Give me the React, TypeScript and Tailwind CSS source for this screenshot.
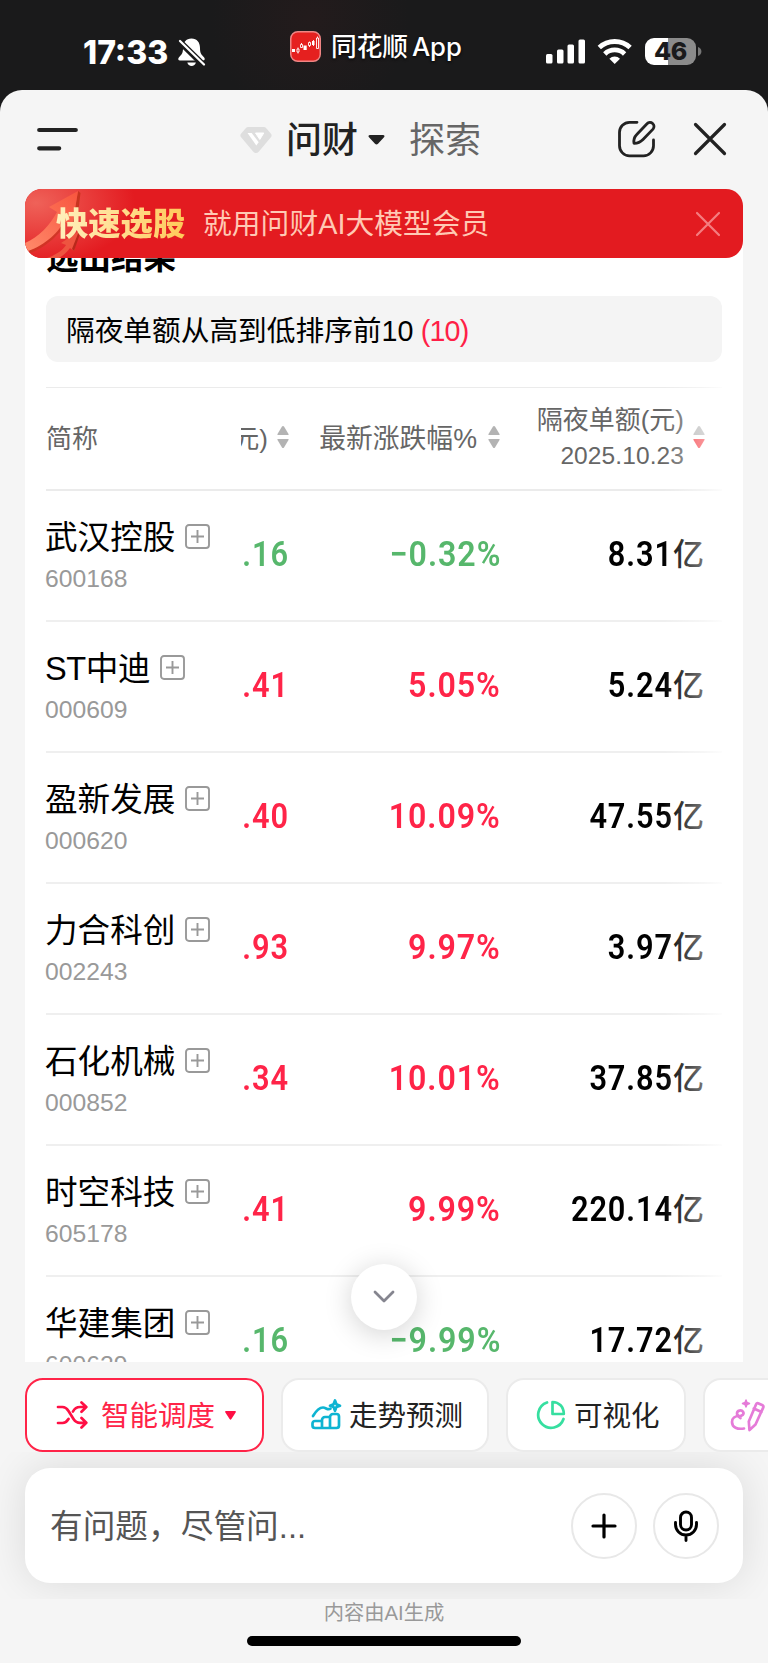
import type { ReactNode } from 'react';

type Row = { name: string; code: string; price: string; change: string; amount: string; down?: boolean };

const rows: Row[] = [
  { name: '武汉控股', code: '600168', price: '.16', change: '−0.32%', amount: '8.31', down: true },
  { name: 'ST中迪', code: '000609', price: '.41', change: '5.05%', amount: '5.24' },
  { name: '盈新发展', code: '000620', price: '.40', change: '10.09%', amount: '47.55' },
  { name: '力合科创', code: '002243', price: '.93', change: '9.97%', amount: '3.97' },
  { name: '石化机械', code: '000852', price: '.34', change: '10.01%', amount: '37.85' },
  { name: '时空科技', code: '605178', price: '.41', change: '9.99%', amount: '220.14' },
  { name: '华建集团', code: '600629', price: '.16', change: '−9.99%', amount: '17.72', down: true },
];

function StatusBar() {
  return (
    <div className="flex h-[90px] items-start text-white">
      <div className="ml-[83px] mt-[37px] w-[90px] whitespace-nowrap font-['Inter'] text-[32px] font-extrabold leading-[31px] tracking-[0px]">17:33</div>
      <svg className="ml-[4px] mt-[37px]" width="30" height="31" viewBox="0 0 30 31" fill="none">
        <path d="M14.500 1.500c-5.500 0-8.500 4-8.500 9.500 0 5-1.200 6.500-4 9.200-1.400 1.500-.8 3.300 1 3.300h23c1.800 0 2.400-1.800 1-3.300-2.800-2.700-4-4.200-4-9.200 0-5.500-3-9.500-8.500-9.500z" fill="#fff" />
        <path d="M10.300 25.500h8.600c-.6 2.200-2.200 3.500-4.300 3.500s-3.700-1.300-4.300-3.500z" fill="#fff" />
        <path d="M2 4 27 28.500" stroke="#1a1a1b" strokeWidth="6" />
        <path d="M3 4 27 27.500" stroke="#fff" strokeWidth="2.300" strokeLinecap="round" />
      </svg>
      <svg className="ml-[83px] mt-[31px]" width="31" height="31" viewBox="0 0 31 31" fill="none">
        <rect x=".75" y=".75" width="29.500" height="29.500" rx="7" fill="#e5201f" stroke="#f08584" strokeWidth="1.500" />
        <path d="M2 18h3v3H2zM13.500 14.500h3.200v4.500h-3.200zM22 10h2.500v4H22z" fill="#fff" />
        <path d="M7 18h2v3H7zM8 16.500V18M8 21v1.500M10.500 13.500h2v3h-2zM11.500 12v1.500M18.500 11.500h2v3h-2zM19.500 10.500v1M19.500 14.500V16M23.500 9v6M26.500 7h2v10.500h-2zM27.500 5.500V7" stroke="#fff" strokeWidth=".9" />
      </svg>
      <div className="ml-[10px] mt-[31px] w-[134px] whitespace-nowrap font-['Inter','Noto_Sans_CJK_SC',sans-serif] text-[25.700px] font-medium leading-[32px] [word-spacing:-3px] [text-shadow:0_1px_3px_#000]">同花顺 App</div>
      <svg className="ml-[81px] mt-[39px]" width="39" height="25" viewBox="0 0 39 25" fill="#fff">
        <rect x="0" y="15" width="6.500" height="9.500" rx="1.500" />
        <rect x="11" y="10.500" width="6.500" height="14" rx="1.500" />
        <rect x="21.500" y="5.500" width="6.500" height="19" rx="1.500" />
        <rect x="32.500" y="0.500" width="6.500" height="24" rx="1.500" />
      </svg>
      <svg className="ml-[12px] mt-[38px]" width="36" height="27" viewBox="0 0 36 27" fill="none" stroke="#fff" strokeWidth="4.800">
        <path d="M2.300 9.600a22.500 22.500 0 0 1 30.800 0" />
        <path d="M7.800 15.900a14.300 14.300 0 0 1 19.800 0" />
        <path d="M17.700 26l-5.300-5.300a7.400 7.400 0 0 1 10.600 0z" fill="#fff" stroke="none" />
      </svg>
      <div className="ml-[12px] mt-[38px] flex h-[27px] w-[51px] items-center justify-center rounded-[9px] bg-[linear-gradient(90deg,#fff_46%,#8b8b8b_46%)] font-['Inter'] text-[25px] font-extrabold leading-[27px] tracking-[-0.3px] text-[#1a1a1b]">46</div>
      <svg className="ml-[2px] mt-[47px]" width="4" height="9" viewBox="0 0 4 9"><path d="M0 0c4.500 1.500 4.500 7.500 0 9z" fill="#777" /></svg>
    </div>
  );
}

function TitleBar() {
  return (
    <div className="flex h-[98px] items-center">
      <svg className="ml-[37px]" width="41" height="24" viewBox="0 0 41 24" stroke="#222" strokeWidth="4.200" strokeLinecap="round">
        <path d="M2.200 3h36.600M2.200 21.300h20" />
      </svg>
      <svg className="ml-[162px] mt-[2px]" width="32" height="28" viewBox="0 0 32 28">
        <path d="M8.500 1h15a4 4 0 0 1 3 1.400l4.500 5.400a2.700 2.700 0 0 1-.1 3.400L18.700 25.800a3.700 3.700 0 0 1-5.400 0L1.100 11.200A2.700 2.700 0 0 1 1 7.800l4.500-5.400A4 4 0 0 1 8.500 1z" fill="#dedede" />
        <path d="M7.500 7h4.200l7 9.200-2.400 3.200z" fill="#fff" />
        <path d="M15.500 7h8.300l-4 6.500z" fill="#fff" stroke="#fff" strokeLinejoin="round" />
      </svg>
      <div className="ml-[14px] mt-[4px] w-[74px] text-[36px] font-medium leading-[50px] text-[#222]">问财</div>
      <svg className="ml-[8px] mt-[1px]" width="17" height="10" viewBox="0 0 17 10"><path d="M2 0h13c1.500 0 2 1.200 1 2.200L10 8.700c-1 1-2 1-3 0L1 2.200C0 1.200.5 0 2 0z" fill="#222" /></svg>
      <div className="ml-[24px] mt-[4px] w-[74px] text-[36px] leading-[50px] text-[#666]">探索</div>
      <svg className="ml-[135px]" width="38" height="38" viewBox="0 0 38 38" fill="none" stroke="#222" strokeWidth="2.800" strokeLinecap="round" strokeLinejoin="round">
        <path d="M19 2.300h-7.500a10 10 0 0 0-10 10v13.500a10 10 0 0 0 10 10h14a10 10 0 0 0 10-10V20" />
        <path d="M16 23.300c-.6-3.300.5-6.500 3-9L29 3.800a4 4 0 0 1 6 5.300L25 19.500c-2.500 2.500-5.500 3.900-9 3.800z" />
      </svg>
      <svg className="ml-[37px]" width="34" height="34" viewBox="0 0 34 34" stroke="#222" strokeWidth="3.200" strokeLinecap="round"><path d="M2.500 2.500l29 29M31.500 2.500l-29 29" /></svg>
    </div>
  );
}

function Banner() {
  return (
    <div className="relative z-10 mx-[25px] mt-[1px] flex h-[69px] items-center overflow-hidden rounded-[17px] bg-[#e31b20]">
      <svg className="absolute left-0 top-0" width="130" height="69" viewBox="0 0 130 69">
        <defs>
          <radialGradient id="glow" cx="0.100" cy="0.200" r="0.900"><stop offset="0" stopColor="#ef6259" /><stop offset="1" stopColor="#e31b20" /></radialGradient>
          <linearGradient id="arrow" x1="0" y1="1" x2="1" y2="0"><stop offset="0" stopColor="#ff8a6b" /><stop offset="1" stopColor="#f8553e" /></linearGradient>
        </defs>
        <rect width="110" height="69" fill="url(#glow)" />
        <path d="M53 2 55.500 4 51 41 47 38z" fill="#c8351f" />
        <path d="M0 62c16-5 32-17 39-31l2 2C34 48 17 60 3 65z" fill="#c8351f" opacity=".7" />
        <path d="M53 2 24 18l8 5C25 36 14 48 0 54v9c17-5 33-18 39-31l8 6z" fill="url(#arrow)" />
        <path d="M22 69c9-3 16-8 19-13l-5-2 18-12-5 20-4-3c-3 4-6 7-11 10z" fill="#ee5440" />
        <path d="M54 42l1.500 1.500L49 62l-2-2z" fill="#b9281b" />
      </svg>
      <div className="relative ml-[31px] w-[130px] bg-gradient-to-r from-[#fff0bd] to-[#ffc956] bg-clip-text text-[32.300px] font-black leading-[48px] text-transparent">快速选股</div>
      <div className="ml-[17px] whitespace-nowrap text-[28.800px] leading-[44px] text-[#ffc9b4]">就用问财AI大模型会员</div>
      <svg className="ml-auto mr-[22px]" width="26" height="26" viewBox="0 0 26 26" stroke="#f47d80" strokeWidth="2.200" strokeLinecap="round"><path d="M2 2l22 22M24 2 2 24" /></svg>
    </div>
  );
}

function Sort({ active }: { active?: boolean }) {
  return (
    <svg className="-mt-[3px] shrink-0" width="12" height="24" viewBox="0 0 12 24">
      <path d="M5 1.500 .5 9c-.3.600 0 1 .5 1h10c.5 0 .8-.4.500-1L7 1.500c-.5-.8-1.500-.8-2 0z" fill="#b3b3b3" />
      <path d="M5 22.500 .5 15c-.3-.6 0-1 .5-1h10c.5 0 .8.400.5 1L7 22.500c-.5.800-1.500.800-2 0z" fill={active ? '#f5383f' : '#b3b3b3'} />
    </svg>
  );
}

function Num({ children, className }: { children: ReactNode; className: string }) {
  return <span className={`inline-block origin-right whitespace-nowrap font-['Roboto'] text-[35px] font-semibold leading-[44px] tracking-[1px] ${className}`}>{children}</span>;
}

function StockRow({ r }: { r: Row }) {
  const tone = r.down ? 'text-[#57b76c]' : 'text-[#ff2448]';
  return (
    <div className="flex h-[131px] shrink-0 border-b-2 border-[#efefef]">
      <div className="-ml-px w-[196px] shrink-0 pt-[23px]">
        <div className="flex h-[48px] items-center">
          <span className={`whitespace-nowrap text-[32.600px] leading-[48px] text-black ${r.name.startsWith('ST') ? 'tracking-[-0.400px]' : ''}`}>{r.name}</span>
          <svg className="ml-[10px] mt-[-4px]" width="25" height="25" viewBox="0 0 25 25" fill="none" stroke="#999" strokeWidth="1.900">
            <rect x="1" y="1" width="23" height="23" rx="3" /><path d="M12.500 6v13M6 12.500h13" />
          </svg>
        </div>
        <div className="mt-[1px] text-[24.700px] leading-[32px] text-[#999]">{r.code}</div>
      </div>
      <div className="flex w-[48px] shrink-0 items-center justify-end pb-px"><Num className={`${tone} scale-x-[0.88]`}>{r.price}</Num></div>
      <div className="flex w-[212px] shrink-0 items-center justify-end pb-px"><Num className={`${tone} scale-x-[0.92]`}>{r.change}</Num></div>
      <div className="flex w-[203px] shrink-0 items-center justify-end pb-px text-black">
        <Num className="scale-x-[0.88]">{r.amount}</Num>
        <span className="text-[31px] font-medium leading-[44px]">亿</span>
      </div>
    </div>
  );
}

function ResultCard() {
  return (
    <div className="relative mx-[25px] -mt-[30px] h-[1134px] overflow-hidden bg-white">
      <div className="flex h-full flex-col pl-[21px] pr-[21px]">
        <div className="mt-[7px] h-[50px] shrink-0 text-[32.500px] font-bold leading-[46px] text-black">选出结果</div>
        <div className="mt-[11px] flex h-[66px] shrink-0 items-center whitespace-pre rounded-[12px] bg-[#f4f4f4] pl-[20px] pt-[6px] text-[28.700px] text-black">
          隔夜单额从高到低排序前10<span className="tracking-[-0.8px] text-[#ff1f47]"> (10)</span>
        </div>
        <div className="mt-[25px] flex h-[104px] shrink-0 items-center border-b-2 border-t border-[#ebebeb] text-[26px] leading-[35px] text-[#666]">
          <div className="mt-[2px] w-[195px] shrink-0">简称</div>
          <div className="flex w-[48px] shrink-0 items-center justify-end overflow-hidden whitespace-nowrap"><span className="mt-[2px]">元)</span><span className="ml-[9px] flex"><Sort /></span></div>
          <div className="flex w-[211px] shrink-0 items-center justify-end gap-[11px] whitespace-nowrap"><span className="mt-[2px] text-[26.800px]">最新涨跌幅%</span><Sort /></div>
          <div className="flex w-[205px] shrink-0 items-center justify-end gap-[9px] whitespace-nowrap">
            <div className="-mt-px text-right"><div>隔夜单额(元)</div><div className="text-[24.500px] tracking-[0.1px]">2025.10.23</div></div>
            <Sort active />
          </div>
        </div>
        {rows.map((r) => <StockRow key={r.code} r={r} />)}
      </div>
      <div className="absolute bottom-0 right-0 top-[150px] w-[80px] bg-[linear-gradient(90deg,rgba(255,255,255,0)_0%,rgba(255,255,255,0.450)_50%,#fff_82%)]" />
      <div className="absolute bottom-[32px] left-[326px] flex h-[66px] w-[66px] items-center justify-center rounded-full bg-white shadow-[0_4px_28px_rgba(0,0,0,0.18)]">
        <svg width="24" height="14" viewBox="0 0 24 14" fill="none" stroke="#85858f" strokeWidth="2.800" strokeLinecap="round" strokeLinejoin="round"><path d="M3 2l9 9 9-9" /></svg>
      </div>
    </div>
  );
}

const chip = 'flex h-[74px] shrink-0 items-center whitespace-nowrap rounded-[18px] border-2 bg-white text-[28.500px]';

function Chips() {
  return (
    <div className="mt-[16px] flex h-[74px] overflow-hidden pl-[25px]">
      <div className={`${chip} w-[239px] border-[#ff2448] text-[#ff2448]`}>
        <svg className="ml-[29px]" width="32" height="28" viewBox="0 0 32 28" fill="none" stroke="#ff0f44" strokeWidth="2.700" strokeLinecap="round" strokeLinejoin="round">
          <path d="M2 6h4.500c3 0 4.500 1.600 6 4l5 8c1.700 2.600 3.500 3.800 6.500 3.800h6M2 22h4.500c3 0 4.500-1.600 6-4M17 10.500C18.500 7.500 21 6 24 6h6M25.500 1.500 30.300 6l-4.800 4.700M25.500 17l4.800 4.800-4.800 4.700" />
        </svg>
        <span className="ml-[13px] mt-[2px]">智能调度</span>
        <svg className="ml-[10px]" width="11" height="9" viewBox="0 0 12 10"><path d="M1 0h10c1 0 1.300.8.700 1.600L7 9c-.6.800-1.400.800-2 0L.3 1.600C-.3.800 0 0 1 0z" fill="#ff0f44" /></svg>
      </div>
      <div className={`${chip} ml-[17px] w-[208px] border-[#ebebeb] text-[#222]`}>
        <svg className="ml-[28px] mt-[-3px]" width="32" height="32" viewBox="0 0 32 32" fill="none" stroke="#0eb4d2" strokeWidth="2.700" strokeLinejoin="round" strokeLinecap="round">
          <path d="M2 18C5 13 8 9.500 12 9.500c3 0 4.500 3 7.500 1.200" />
          <path d="M4 23h7v7H4a2.500 2.500 0 0 1-2.500-2.500v-2A2.500 2.500 0 0 1 4 23zM11 22a3 3 0 0 1 3-3h5v11h-8zM19 19a3 3 0 0 1 3-3h3.500a2.500 2.500 0 0 1 2.500 2.500v9a2.500 2.500 0 0 1-2.500 2.500H19z" />
          <path d="M24 2.500 25.400 6.300 29 7.700 25.400 9.100 24 12.900 22.600 9.100 19 7.700 22.600 6.300z" strokeWidth="2.700" />
        </svg>
        <span className="ml-[6px] mt-[2px]">走势预测</span>
      </div>
      <div className={`${chip} ml-[17px] w-[180px] border-[#ebebeb] text-[#222]`}>
        <svg className="ml-[28px]" width="30" height="30" viewBox="0 0 30 30" fill="none" stroke="#36dfa0" strokeWidth="2.700" strokeLinecap="round" strokeLinejoin="round">
          <path d="M11 2.500A13 13 0 1 0 27.500 19" />
          <path d="M16.500 2v12h11.300C27.800 6.500 23 2.200 16.500 2z" />
        </svg>
        <span className="ml-[8px] mt-[2px]">可视化</span>
      </div>
      <div className={`${chip} ml-[17px] w-[179px] border-[#ebebeb] text-[#222]`}>
        <svg className="ml-[25px]" width="35" height="34" viewBox="0 0 35 34" fill="none" stroke="#e57bd8" strokeWidth="2.700" strokeLinecap="round" strokeLinejoin="round">
          <path d="M14 30.500c-6.500 1-12-1-12-6.500 0-4 3-6 7-6 3.500 0 5.500-2 4-4.300-1.500-2.200-6-1.200-6 1.800 0 1.700 1 3 3.500 4.500" />
          <path d="M26 6.500c.5-1.200 1.500-1.600 2.600-1.100l3.500 1.500c1.200.5 1.600 1.500 1.100 2.700L25.500 26.500l-6 5.500-.7-8.500zM23.800 10.500l7.700 3.500" />
          <path d="M16 2l1 2.500 2.500 1-2.500 1-1 2.500-1-2.500-2.500-1 2.500-1z" fill="#e57bd8" strokeWidth="1.500" />
        </svg>
      </div>
    </div>
  );
}

function Composer() {
  return (
    <div className="h-[147px] overflow-hidden px-[25px] pt-[16px]">
      <div className="flex h-[115px] items-center rounded-[25px] bg-white pl-[25px] pr-[24px] shadow-[0_0_40px_rgba(0,0,0,0.11)]">
        <span className="mt-[2px] whitespace-nowrap text-[32.700px] text-[#555]">有问题，尽管问...</span>
        <div className="ml-auto flex h-[66px] w-[66px] items-center justify-center rounded-full border-2 border-[#e8e8e8]">
          <svg width="26" height="26" viewBox="0 0 26 26" stroke="#000" strokeWidth="3.200" strokeLinecap="round"><path d="M13 2v22M2 13h22" /></svg>
        </div>
        <div className="ml-[16px] flex h-[66px] w-[66px] items-center justify-center rounded-full border-2 border-[#e8e8e8]">
          <svg width="26" height="32" viewBox="0 0 26 32" fill="none" stroke="#000" strokeWidth="2.900" strokeLinecap="round">
            <rect x="7.500" y="2" width="11" height="18" rx="5.500" />
            <path d="M2.500 12.500v2a10.500 10.500 0 0 0 21 0v-2M13 25v5.500" />
          </svg>
        </div>
      </div>
    </div>
  );
}

export default function App() {
  return (
    <div className="h-[1663px] w-[768px] overflow-hidden bg-[#1a1a1b] bg-[radial-gradient(circle_at_310px_20px,#231b1c_0,#1a1a1b_100px)] font-['Liberation_Sans','Noto_Sans_CJK_SC',sans-serif]">
      <StatusBar />
      <div className="h-[1573px] rounded-t-[22px] bg-[#f5f5f5]">
        <TitleBar />
        <Banner />
        <ResultCard />
        <Chips />
        <Composer />
        <div className="mt-px flex h-[26px] items-center justify-center text-[20.300px] text-[#999]">内容由AI生成</div>
        <div className="mx-auto mt-[10px] h-[10px] w-[274px] rounded-full bg-black" />
      </div>
    </div>
  );
}
